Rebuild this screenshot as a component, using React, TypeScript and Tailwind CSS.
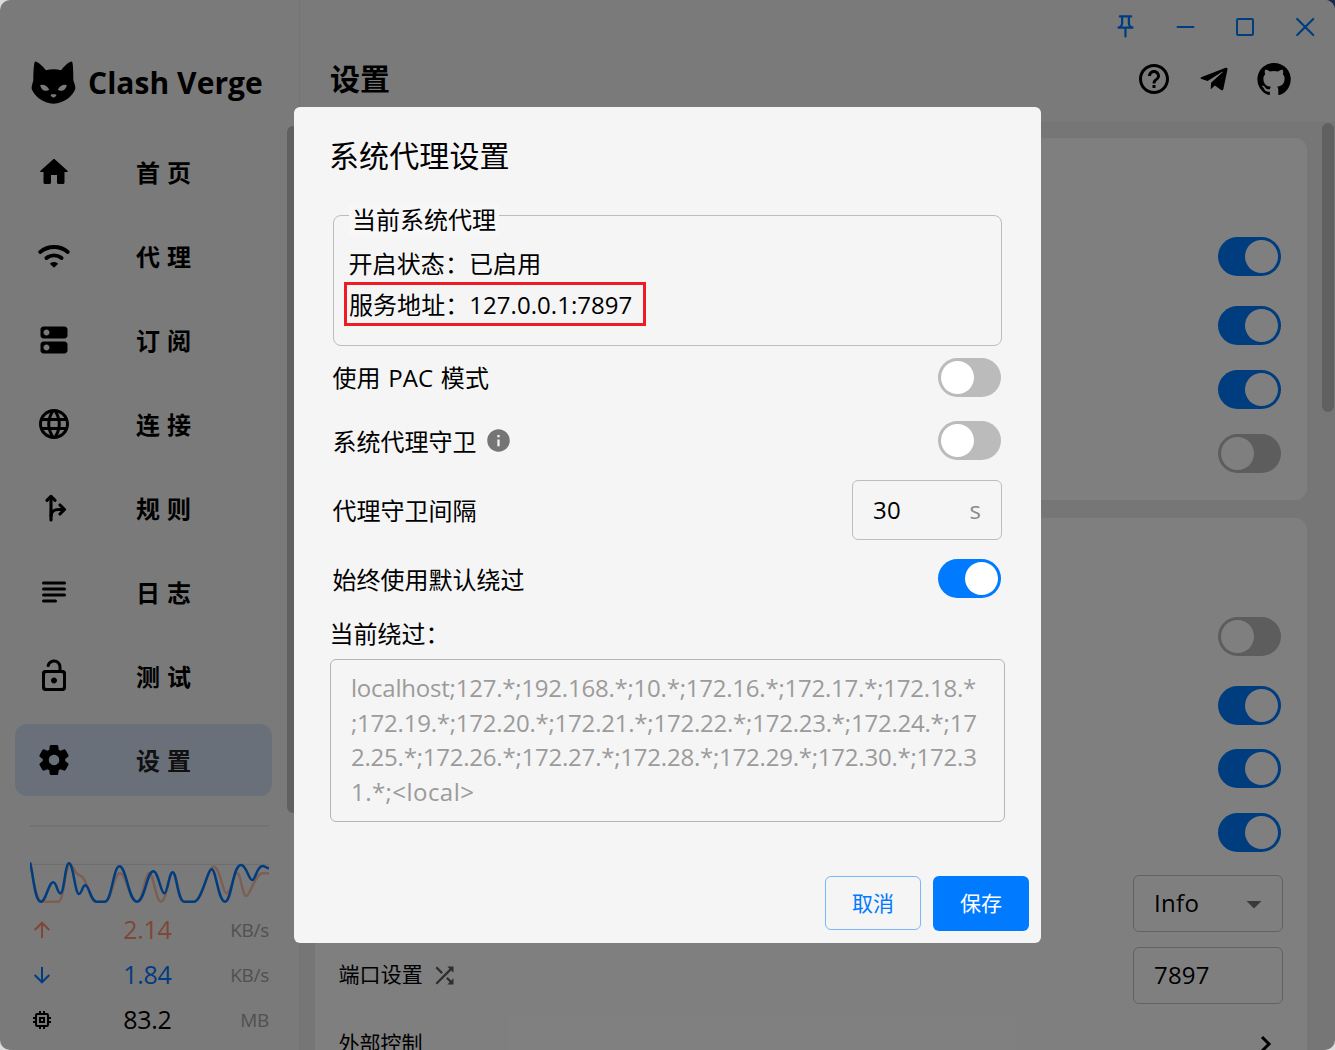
import type { ReactNode } from "react";
import {
  MdArrowDropDown,
  MdHelpOutline,
  MdInfo,
  MdLanguage,
  MdOutlinePushPin,
  MdShuffle,
} from "react-icons/md";

function Glyph({ d }: { d: string }) {
  return (
    <svg viewBox="0 0 24 24" className="size-9 shrink-0" fill="currentColor">
      <path d={d} />
    </svg>
  );
}

const HOME =
  "M10 19v-5h4v5c0 .55.45 1 1 1h3c.55 0 1-.45 1-1v-7h1.7c.46 0 .68-.57.33-.87L12.67 3.6c-.38-.34-.96-.34-1.34 0l-8.36 7.53c-.34.3-.13.87.33.87H5v7c0 .55.45 1 1 1h3c.55 0 1-.45 1-1z";
const DNS =
  "M19 13H5c-1.1 0-2 .9-2 2v4c0 1.1.9 2 2 2h14c1.1 0 2-.9 2-2v-4c0-1.1-.9-2-2-2M7 19c-1.1 0-2-.9-2-2s.9-2 2-2 2 .9 2 2-.9 2-2 2M19 3H5c-1.1 0-2 .9-2 2v4c0 1.1.9 2 2 2h14c1.1 0 2-.9 2-2V5c0-1.1-.9-2-2-2M7 9c-1.1 0-2-.9-2-2s.9-2 2-2 2 .9 2 2-.9 2-2 2";
const LOCK =
  "M12 13c-1.1 0-2 .9-2 2s.9 2 2 2 2-.9 2-2-.9-2-2-2m6-5h-1V6c0-2.76-2.24-5-5-5-2.28 0-4.27 1.54-4.84 3.75-.14.54.18 1.08.72 1.22.53.14 1.08-.18 1.22-.72C9.44 3.93 10.63 3 12 3c1.65 0 3 1.35 3 3v2H6c-1.1 0-2 .9-2 2v10c0 1.1.9 2 2 2h12c1.1 0 2-.9 2-2V10c0-1.1-.9-2-2-2m0 11c0 .55-.45 1-1 1H7c-.55 0-1-.45-1-1v-8c0-.55.45-1 1-1h10c.55 0 1 .45 1 1z";
const GEAR =
  "M19.5 12c0-.23-.01-.45-.03-.68l1.86-1.41c.4-.3.51-.86.26-1.3l-1.87-3.23c-.25-.44-.79-.62-1.25-.42l-2.15.91c-.37-.26-.76-.49-1.17-.68l-.29-2.31c-.06-.5-.49-.88-.99-.88h-3.73c-.51 0-.94.38-1 .88l-.29 2.31c-.41.19-.8.42-1.17.68l-2.15-.91c-.46-.2-1-.02-1.25.42L2.41 8.62c-.25.44-.14.99.26 1.3l1.86 1.41c-.02.22-.03.44-.03.67s.01.45.03.68l-1.86 1.41c-.4.3-.51.86-.26 1.3l1.87 3.23c.25.44.79.62 1.25.42l2.15-.91c.37.26.76.49 1.17.68l.29 2.31c.06.5.49.88.99.88h3.73c.5 0 .93-.38.99-.88l.29-2.31c.41-.19.8-.42 1.17-.68l2.15.91c.46.2 1 .02 1.25-.42l1.87-3.23c.25-.44.14-.99-.26-1.3l-1.86-1.41c.03-.23.04-.45.04-.68m-7.46 3.5c-1.93 0-3.5-1.57-3.5-3.5s1.57-3.5 3.5-3.5 3.5 1.57 3.5 3.5-1.57 3.5-3.5 3.5";
const TELEGRAM =
  "M9.78 18.65l.28-4.23 7.68-6.92c.34-.31-.07-.46-.52-.19L7.74 13.3 3.64 12c-.88-.25-.89-.86.2-1.3l15.97-6.16c.73-.33 1.43.18 1.15 1.3l-2.72 12.81c-.19.91-.74 1.13-1.5.71L12.6 16.3l-1.99 1.93c-.23.23-.42.42-.83.42z";
const GITHUB =
  "M12 1.27a11 11 0 00-3.48 21.46c.55.09.73-.28.73-.55v-1.84c-3.03.64-3.67-1.46-3.67-1.46-.55-1.29-1.28-1.65-1.28-1.65-.92-.65.1-.65.1-.65 1.1 0 1.73 1.1 1.73 1.1.92 1.65 2.57 1.2 3.21.92a2 2 0 01.64-1.47c-2.47-.27-5.04-1.19-5.04-5.5 0-1.1.46-2.1 1.2-2.84a3.76 3.76 0 010-2.93s.91-.28 3.11 1.1c1.8-.49 3.7-.49 5.5 0 2.1-1.38 3.02-1.1 3.02-1.1a3.76 3.76 0 01.1 2.93c.83.74 1.2 1.74 1.2 2.94 0 4.21-2.57 5.13-5.04 5.4.45.37.82.92.82 2.02v3.03c0 .27.1.64.73.55A11 11 0 0012 1.27";

function WifiGlyph() {
  return (
    <svg viewBox="0 0 24 24" className="size-9" fill="none" stroke="currentColor" strokeLinecap="round">
      <path d="M2.8 9.3c5.3-4.4 13.1-4.4 18.4 0" strokeWidth="2.6" />
      <path d="M7 13.3c2.9-2.3 7.1-2.3 10 0" strokeWidth="2.6" />
      <path d="M9.9 17.2c1.3-.9 2.9-.9 4.2 0L12 19.2z" fill="currentColor" strokeWidth="1" strokeLinejoin="round" />
    </svg>
  );
}

function ForkGlyph() {
  return (
    <svg viewBox="0 0 24 24" className="size-9" fill="none" stroke="currentColor" strokeWidth="2.1" strokeLinecap="round" strokeLinejoin="round">
      <path d="M10 20V4.6" />
      <path d="M7.3 6.9L10 4.2l2.7 2.7" />
      <path d="M10 17.6c0-3 2.2-4.6 5-4.6h3.4" strokeLinecap="butt" />
      <path d="M16 10l3 3-3 3" />
    </svg>
  );
}

function LinesGlyph() {
  return (
    <svg viewBox="0 0 24 24" className="size-9" fill="none" stroke="currentColor" strokeWidth="2" strokeLinecap="round">
      <path d="M5 6h14M5 10h14M5 14h14M5 18h8" />
    </svg>
  );
}

function CatLogo() {
  return (
    <svg viewBox="92 184 134 130" className="h-[43px] w-[45px] shrink-0">
      <path
        fillRule="evenodd"
        d="M103 186C100 187 98 215 98 243C95 254 92 262 93 269C101 290 128 313 159 313C190 313 217 290 225 269C226 262 223 254 219 243C219 215 218 188 215 186C209 184 194 197 182 212C167 208 151 208 136 212C124 197 108 184 103 186ZM119 257C128 254 140 258 146 271C138 277 122 275 119 257ZM199 257C196 275 180 277 172 271C178 258 190 254 199 257ZM150 286C155 284 163 284 168 286C167 290 164 294 159 294C154 294 151 290 150 286Z"
      />
    </svg>
  );
}

const NAV: { label: string; icon: ReactNode; active?: boolean }[] = [
  { label: "首页", icon: <Glyph d={HOME} /> },
  { label: "代理", icon: <WifiGlyph /> },
  { label: "订阅", icon: <Glyph d={DNS} /> },
  { label: "连接", icon: <MdLanguage className="size-9" /> },
  { label: "规则", icon: <ForkGlyph /> },
  { label: "日志", icon: <LinesGlyph /> },
  { label: "测试", icon: <Glyph d={LOCK} /> },
  { label: "设置", icon: <Glyph d={GEAR} />, active: true },
];

function TrafficChart() {
  return (
    <svg viewBox="90 144 717 144" className="h-12 w-[239px]" fill="none">
      <path d="M90 163H807" stroke="#d8d8d8" strokeWidth="3" />
      <path
        stroke="#fc9b76"
        strokeOpacity=".6"
        strokeWidth="7.5"
        d="M90 160C100 200 108 275 125 275L175 275C192 275 195 165 209 165C222 165 222 192 240 196C262 202 268 275 288 275L315 275C335 275 340 190 360 190C380 190 387 275 411 275C430 275 434 189 448 189C460 189 467 275 483 275C500 275 505 190 518 190C532 190 535 275 553 275L582 275C608 275 622 170 641 170C660 170 668 250 680 250C692 250 700 190 712 190C722 190 727 258 739 258C750 258 765 190 788 190L807 190"
      />
      <path
        stroke="#007aff"
        strokeWidth="7.5"
        d="M90 157C100 190 103 275 123 275C138 275 145 217 160 217C170 217 172 250 181 250C193 250 195 160 207 160C220 160 225 252 237 252C245 252 247 226 256 226C268 226 272 275 290 275L315 275C335 275 340 169 358 169C380 169 385 275 411 275C435 275 440 184 460 184C475 184 482 250 493 250C503 250 507 187 518 187C530 187 533 275 553 275L582 275C605 275 622 178 635 178C648 178 655 275 675 275C695 275 698 165 723 165C740 165 745 210 757 210C767 210 770 168 788 168C795 168 798 175 807 175"
      />
    </svg>
  );
}

function ArrowGlyph({ down }: { down?: boolean }) {
  return (
    <svg viewBox="0 0 24 24" className="size-6" fill="none" stroke="currentColor" strokeWidth="2">
      <path d={down ? "M12 4v15M4.7 12L12 19.3 19.3 12" : "M12 20V5M4.7 12L12 4.7 19.3 12"} />
    </svg>
  );
}

function ChipGlyph() {
  return (
    <svg viewBox="0 0 24 24" className="size-6" fill="none" stroke="currentColor" strokeWidth="2">
      <rect x="6" y="6" width="12" height="12" rx="1.2" />
      <rect x="10" y="10" width="4" height="4" />
      <path d="M10 3v3M14 3v3M10 18v3M14 18v3M3 10h3M3 14h3M18 10h3M18 14h3" />
    </svg>
  );
}

function Stat({ icon, value, unit, tone }: { icon: ReactNode; value: string; unit: string; tone: string }) {
  return (
    <div className={`flex h-[45px] items-center ${tone}`}>
      {icon}
      <span className="w-[187px] text-center text-[25px] tracking-[-0.3px]">{value}</span>
      <span className="-ml-6 w-[52px] pt-0.5 text-right text-[19px] tracking-[-0.3px] whitespace-nowrap text-[#a2a2a2]">{unit}</span>
    </div>
  );
}

function Sidebar() {
  return (
    <aside className="relative flex w-[300px] shrink-0 flex-col border-r border-[#e6e6e6] bg-[#f5f5f5]">
      <div className="flex h-[124px] items-end gap-3 pb-5 pl-[31px]">
        <CatLogo />
        <span className="text-[30px] leading-[42px] font-bold tracking-[0.05px] whitespace-nowrap">Clash Verge</span>
      </div>
      <nav className="flex flex-col gap-3 px-[15px] pt-3">
        {NAV.map((n) => (
          <div
            key={n.label}
            className={`flex h-[72px] w-[257px] items-center rounded-xl pl-[21px] ${n.active ? "bg-[#d3e0f5] text-[#222]" : ""}`}
          >
            <span className="w-[100px] text-black">{n.icon}</span>
            <span className="pt-0.5 text-2xl font-bold tracking-[7px]">{n.label}</span>
          </div>
        ))}
      </nav>
      <div className="mx-[30px] mt-[29px] h-0.5 w-[239px] bg-[#e4e4e4]" />
      <div className="flex flex-col px-[30px] pt-[31px]">
        <TrafficChart />
        <div className="mt-px flex flex-col">
          <Stat icon={<ArrowGlyph />} value="2.14" unit="KB/s" tone="text-[#fc8e6e]" />
          <Stat icon={<ArrowGlyph down />} value="1.84" unit="KB/s" tone="text-[#007aff]" />
          <Stat icon={<ChipGlyph />} value="83.2" unit="MB" tone="text-black" />
        </div>
      </div>
      <div className="absolute top-[126px] right-0 h-[687px] w-3 rounded-md bg-[#bec0c4]" />
    </aside>
  );
}

function Switch({ on }: { on?: boolean }) {
  return (
    <div className={`flex h-[39px] w-[63px] shrink-0 items-center rounded-full p-[3px] ${on ? "justify-end bg-[#007aff]" : "bg-[#bbb]"}`}>
      <div className="size-[33px] rounded-full bg-white" />
    </div>
  );
}

function Header() {
  return (
    <header className="flex h-[123px] shrink-0 flex-col border-b border-[#e9e9e9] bg-[#f5f5f5]">
      <div className="flex h-[53px] items-center justify-end gap-[33px] pr-4 text-[#007aff]">
        <MdOutlinePushPin className="size-[27px]" />
        <svg viewBox="0 0 27 27" className="size-[27px]" fill="none" stroke="currentColor" strokeWidth="2" strokeLinecap="round">
          <path d="M5.5 14h16" />
        </svg>
        <svg viewBox="0 0 27 27" className="size-[27px]" fill="none" stroke="currentColor" strokeWidth="2">
          <rect x="5" y="6" width="16" height="16" rx="1.2" />
        </svg>
        <svg viewBox="0 0 27 27" className="size-[27px]" fill="none" stroke="currentColor" strokeWidth="2.2" strokeLinecap="round">
          <path d="M5.2 6l16 16M21.2 6l-16 16" />
        </svg>
      </div>
      <div className="flex h-[52px] items-center justify-between pr-[43px] pl-[30px]">
        <h1 className="text-[30px] leading-[50px] font-bold">设置</h1>
        <div className="flex gap-6">
          <MdHelpOutline className="size-9" />
          <Glyph d={TELEGRAM} />
          <Glyph d={GITHUB} />
        </div>
      </div>
    </header>
  );
}

function Box({ children }: { children: ReactNode }) {
  return (
    <div className="-mr-0.5 flex h-[57px] w-[150px] items-center justify-between rounded-md border border-[#c4c4c4] pr-2.5 pl-5 text-2xl">
      {children}
    </div>
  );
}

function SettingsPanel() {
  return (
    <div className="relative flex flex-1 flex-col gap-[18px] overflow-hidden bg-[#ececec] pt-[15px] pr-7 pl-[15px]">
      <section className="flex h-[362px] shrink-0 flex-col items-end rounded-xl bg-white pt-[84px] pr-[26px]">
        <div className="flex h-[69px] items-center"><Switch on /></div>
        <div className="flex h-[69px] items-center"><Switch on /></div>
        <div className="flex h-[59px] items-center"><Switch on /></div>
        <div className="flex h-[69px] items-center"><Switch /></div>
      </section>
      <section className="flex h-[600px] shrink-0 flex-col rounded-t-xl bg-white pt-[84px] pr-[26px] pl-[23.5px] text-[21px]">
        <div className="flex h-[69px] items-center justify-end"><Switch /></div>
        <div className="flex h-[69px] items-center justify-end"><Switch on /></div>
        <div className="flex h-[57px] items-center justify-end"><Switch on /></div>
        <div className="flex h-[71px] items-center justify-end"><Switch on /></div>
        <div className="flex h-[71px] items-center justify-end">
          <Box>
            <span className="pb-0.5 tracking-[0.3px]">Info</span>
            <MdArrowDropDown className="size-9 text-[#757575]" />
          </Box>
        </div>
        <div className="flex h-[73px] items-center justify-between">
          <span className="flex items-center gap-2">
            <span className="pb-0.5 tracking-[0.1px]">端口设置</span>
            <MdShuffle className="size-[27px] text-[#5c5c5c]" />
          </span>
          <Box><span className="pb-0.5 tracking-[0.2px]">7897</span></Box>
        </div>
        <div className="flex h-[63px] items-center justify-between">
          外部控制
          <svg viewBox="0 0 16 18" className="mr-[7px] h-[18px] w-4" fill="none" stroke="currentColor" strokeWidth="3">
            <path d="M4 2l7 7-7 7" />
          </svg>
        </div>
      </section>
      <div className="absolute top-0 right-px h-[289px] w-3 rounded-md bg-[#bec0c4]" />
    </div>
  );
}

const BYPASS = [
  "localhost;127.*;192.168.*;10.*;172.16.*;172.17.*;172.18.*",
  ";172.19.*;172.20.*;172.21.*;172.22.*;172.23.*;172.24.*;17",
  "2.25.*;172.26.*;172.27.*;172.28.*;172.29.*;172.30.*;172.3",
];

function ProxyDialog() {
  return (
    <div className="flex h-[836px] w-[747px] flex-col rounded-md bg-[#f5f5f5] text-2xl text-black">
      <h2 className="mt-[25px] ml-[35px] text-[30px] leading-[48px] tracking-[0.1px]">系统代理设置</h2>
      <div className="relative mt-[35px] ml-[39px] flex h-[131px] w-[669px] flex-col rounded-lg border border-[#bdbdbd] pt-[27px] pl-[14.5px]">
        <span className="absolute -top-[13px] left-[15px] h-8 w-[150px] bg-[#f7f7f7] pl-[3px] leading-[34px]">当前系统代理</span>
        <p className="h-[42px] leading-[42px] tracking-[0.1px]">开启状态：已启用</p>
        <p className="-mt-[3px] -ml-[4.5px] h-11 w-[302px] border-[3px] border-[#ed1c24] pl-[2px] leading-[39px] tracking-[0.05px] whitespace-nowrap">
          服务地址：127.0.0.1:7897
        </p>
      </div>
      <div className="flex flex-col pr-10 pl-[38.5px]">
        <div className="flex h-[63px] items-center justify-between">
          <span className="pt-px tracking-[0.1px] [word-spacing:1.2px]">使用 PAC 模式</span>
          <Switch />
        </div>
        <div className="flex h-[63px] items-center justify-between">
          <span className="flex items-center gap-2">
            <span className="pt-0.5">系统代理守卫</span>
            <MdInfo className="size-[27px] text-[#757575]" />
          </span>
          <Switch />
        </div>
        <div className="flex h-[76px] items-center justify-between">
          <span className="pt-0.5">代理守卫间隔</span>
          <div className="-mr-px flex h-[60px] w-[150px] items-center justify-between rounded-md border border-[#bdbdbd] px-5">
            <span className="pb-px tracking-[0.2px]">30</span>
            <span className="text-[#8a8a8a]">s</span>
          </div>
        </div>
        <div className="flex h-[61px] items-center justify-between">
          <span className="pt-[3px]">始终使用默认绕过</span>
          <Switch on />
        </div>
      </div>
      <div className="mt-1 ml-[35.5px] h-[46px] leading-[42px]">当前绕过：</div>
      <div className="ml-9 h-[163px] w-[675px] rounded-md border border-[#b5b5b5] pt-[11px] pl-5 leading-[34.5px] tracking-[-0.22px] text-[#9b9b9b]">
        {BYPASS.map((line) => (
          <div key={line} className="whitespace-nowrap">{line}</div>
        ))}
        <div className="tracking-[0.45px] whitespace-nowrap">{"1.*;<local>"}</div>
      </div>
      <div className="mt-[54px] flex justify-end gap-3 pr-3 text-[21px]">
        <button className="h-[54px] w-24 rounded-md border border-[#7ab8fb] text-[#007aff]">取消</button>
        <button className="h-[55px] w-24 rounded-md bg-[#007aff] pb-0.5 text-white">保存</button>
      </div>
    </div>
  );
}

export default function App() {
  return (
    <div className="relative h-[1050px] w-[1335px] overflow-hidden bg-[#dcdcdc] font-['Open_Sans','Noto_Sans_CJK_SC',sans-serif] text-black">
      <div className="absolute top-0 right-0 size-4 bg-[#1b2a4a]" />
      <div className="relative flex h-full overflow-hidden rounded-[10px]">
        <Sidebar />
        <main className="flex min-w-0 flex-1 flex-col">
          <Header />
          <SettingsPanel />
        </main>
        <div className="absolute inset-0 grid place-items-center bg-black/50">
          <ProxyDialog />
        </div>
      </div>
    </div>
  );
}
